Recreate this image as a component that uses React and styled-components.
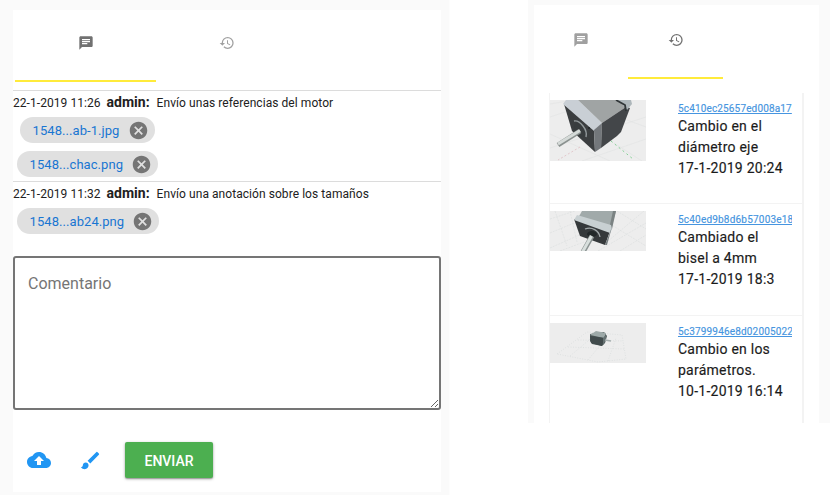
import React from "react";
import styled, { createGlobalStyle } from "styled-components";

const GlobalStyle = createGlobalStyle`
  * { box-sizing: border-box; }
  body { margin: 0; background: #fff; overflow: hidden; font-family: Roboto, sans-serif; color: #212121; }
`;

const Page = styled.main`
  display: flex;
  align-items: flex-start;
  width: 836px;
  height: 495px;
  background: #fff;
`;

const CommentsPane = styled.section`
  width: 450px;
  height: 495px;
  padding: 10px 8px 3px 13px;
  background: #fafafa;
  border-right: 1px solid #fdfdfd;
`;

const Surface = styled.div`
  height: 100%;
  background: #fff;
`;

const HistoryPane = styled.section`
  width: 302px;
  height: 423px;
  margin-left: 78px;
  padding: 5px 11px 0 6px;
  background: #fafafa;
`;

const Tabs = styled.nav`
  display: flex;
  height: ${(p) => p.$height}px;
  padding-left: ${(p) => p.$inset}px;
`;

const Tab = styled.button`
  display: flex;
  align-items: center;
  justify-content: center;
  width: ${(p) => p.$width}px;
  height: 100%;
  padding: 0 0 ${(p) => p.$lift}px;
  border: 0;
  border-bottom: 2px solid ${(p) => (p.$active ? "#ffeb3b" : "transparent")};
  background: none;
  color: ${(p) => (p.$active ? "#717171" : "#a0a0a0")};
`;

const Thread = styled.div`
  margin-top: 8px;
`;

const Comment = styled.article`
  height: ${(p) => p.$height}px;
  border-top: 1px solid #dcdcdc;
`;

const Meta = styled.p`
  display: flex;
  align-items: baseline;
  margin: 0;
  height: 26px;
  line-height: 23px;
  font-size: 12px;
  letter-spacing: 0.06px;
  white-space: pre;
`;

const Author = styled.strong`
  width: 50px;
  margin-left: 6px;
  font-size: 14px;
  font-weight: 700;
  letter-spacing: 0;
`;

const Files = styled.div`
  display: flex;
  flex-direction: column;
  align-items: flex-start;
  gap: 8px;
`;

const Chip = styled.span`
  display: flex;
  align-items: center;
  justify-content: space-between;
  width: ${(p) => p.$width}px;
  height: 26px;
  margin-left: ${(p) => p.$indent}px;
  padding: 0 6px 0 12.6px;
  border-radius: 13px;
  background: #e0e0e0;
  color: #1976d2;
  font-size: 13px;
  letter-spacing: 0.06px;
  white-space: nowrap;
`;

const CommentBox = styled.textarea`
  display: block;
  width: 428px;
  height: 154px;
  margin: 21px 0 0;
  padding: 16px 13px;
  border: 2px solid #757575;
  border-radius: 3px;
  outline: 0;
  background: #fff;
  font: 16px/20px Roboto, sans-serif;
  resize: both;
  &::placeholder { color: #757575; opacity: 1; }
`;

const Actions = styled.div`
  display: flex;
  align-items: center;
  height: 36px;
  margin-top: 32px;
  padding-left: 13px;
`;

const IconButton = styled.button`
  display: flex;
  width: 25px;
  height: 25px;
  margin-right: ${(p) => p.$after}px;
  padding: 0;
  border: 0;
  align-items: center;
  justify-content: center;
  background: none;
  color: #2196f3;
`;

const SendButton = styled.button`
  width: 88px;
  height: 36px;
  padding: 1px 0 0;
  border: 0;
  border-radius: 2px;
  background: #4caf50;
  box-shadow: 0 1px 3px rgba(0, 0, 0, 0.35), 0 1px 1px rgba(0, 0, 0, 0.18);
  color: #fff;
  font: 500 14px Roboto, sans-serif;
`;

const Versions = styled.div`
  width: 255px;
  height: 330px;
  margin: 14px 0 0 15px;
  overflow: hidden;
`;

const Version = styled.article`
  display: flex;
  height: ${(p) => p.$height}px;
  padding: 7px 10px 0 0;
  border: solid #f3f3f3;
  border-width: 0 2px 1px 1px;
`;

const Thumb = styled.svg`
  display: block;
  width: 96px;
  flex: none;
  background: #ededed;
`;

const VersionInfo = styled.div`
  width: 114px;
  margin: -1px 0 0 32px;
  overflow: hidden;
  font-size: 14px;
  line-height: 21.2px;
  letter-spacing: 0.24px;
  color: #1b1b1b;
  -webkit-text-stroke: 0.15px currentColor;
  white-space: pre-line;
`;

const VersionLink = styled.a`
  display: block;
  height: 17px;
  overflow: hidden;
  font-size: 10px;
  line-height: 19px;
  letter-spacing: ${(p) => p.$tracking}px;
  color: #4695e0;
  text-decoration: underline;
  white-space: nowrap;
`;

const Glyph = ({ size, d }) => (
  <svg width={size} height={size} viewBox="0 0 24 24" fill="currentColor">
    <path d={d} />
  </svg>
);

const paths = {
  chat: "M20 2H4c-1.1 0-1.99.9-1.99 2L2 22l4-4h14c1.1 0 2-.9 2-2V4c0-1.1-.9-2-2-2zM6 9h12v2H6V9zm8 5H6v-2h8v2zm4-6H6V6h12v2z",
  history: "M13 3a9 9 0 0 0-9 9H1l3.89 3.89.07.14L9 12H6c0-3.87 3.13-7 7-7s7 3.13 7 7-3.13 7-7 7c-1.93 0-3.68-.79-4.94-2.06l-1.42 1.42A8.954 8.954 0 0 0 13 21a9 9 0 0 0 0-18zm-1 5v5l4.28 2.54.72-1.21-3.5-2.08V8H12z",
  cancel: "M12 2C6.47 2 2 6.47 2 12s4.47 10 10 10 10-4.47 10-10S17.53 2 12 2zm5 13.59L15.59 17 12 13.41 8.41 17 7 15.59 10.59 12 7 8.41 8.41 7 12 10.59 15.59 7 17 8.41 13.41 12 17 15.59z",
  upload: "M19.35 10.04C18.67 6.59 15.64 4 12 4 9.11 4 6.6 5.64 5.35 8.04 2.34 8.36 0 10.91 0 14c0 3.31 2.69 6 6 6h13c2.76 0 5-2.24 5-5 0-2.64-2.05-4.78-4.65-4.96zM14 13v4h-4v-4H7l5-5 5 5h-3z",
  brush: "M7 14c-1.66 0-3 1.34-3 3 0 1.31-1.16 2-2 2 .92 1.22 2.49 2 4 2 2.21 0 4-1.79 4-4 0-1.66-1.34-3-3-3zm13.71-9.37-1.34-1.34a.996.996 0 0 0-1.41 0L9 12.25 11.75 15l8.96-8.96a.996.996 0 0 0 0-1.41z",
};

const FileChip = ({ name, width, indent }) => (
  <Chip $width={width} $indent={indent}>
    {name}
    <svg width="21" height="21" viewBox="0 0 24 24" fill="#757575">
      <path d={paths.cancel} />
    </svg>
  </Chip>
);

const CloseMotor = () => (
  <Thumb height="61" viewBox="0 0 96 61">
    <g stroke="#e1e3e3" strokeWidth=".6">
      <path d="M0 4 24 0M0 17 18 11M0 48 96 17M32 61 96 39M0 34 60 61M64 43 92 61M77 20 96 27" />
    </g>
    <path d="M30 47 8 60" stroke="#e2c8cc" strokeDasharray="2 2" />
    <path d="M61 41 83 59" stroke="#86d096" strokeDasharray="2 3" />
    <path d="M14 4 44 30 45 52 22 31Z" fill="#3b3e40" />
    <path d="M13 4 16 0H28L52 23 44 31Z" fill="#c9cfd5" />
    <path d="M28 0H67L76 7 52 23Z" fill="#a0a4a4" />
    <path d="M44 30 52 23 51 48 45 52Z" fill="#73777b" />
    <path d="M52 23 76 7 80 8 71 32 67 36 51 48Z" fill="#434649" />
    <path d="M68 0H81L82 4 77 10Z" fill="#aeb7bb" />
    <path d="M66 0 75 5 76 11" fill="none" stroke="#303638" strokeWidth="1.8" />
    <ellipse cx="30" cy="30" rx="5" ry="8" transform="rotate(-32 30 30)" fill="#383c3e" />
    <path d="M24 21C30 20 38 30 36 37" fill="none" stroke="#92999b" strokeWidth="1.4" />
    <path d="M30 31 8 45" stroke="#8a918f" strokeWidth="5" />
    <path d="M30 30.5 8 44" stroke="#d5dad8" strokeWidth="3" />
    <circle cx="39" cy="28" r="1" fill="#202426" />
  </Thumb>
);

const TiltedMotor = () => (
  <Thumb height="40" viewBox="0 0 96 40">
    <g fill="none" stroke="#dadddd" strokeWidth=".6" strokeDasharray="2 1">
      <path d="M0 8 25 0M0 22 29 10M0 37 34 22M10 40 34 31M58 30 94 0M67 0 96 18M60 13 96 35M48 40 96 12M70 40 96 24M5 0 17 35M20 0 27 31" />
    </g>
    <path d="M32 0H66L61 18 28 7Z" fill="#a1aaaa" />
    <path d="M63 0H66L62 18 59 18Z" fill="#7a8282" />
    <path d="M24 8 60 20 55 34 30 25Z" fill="#35393b" />
    <path d="M27 4 61 14 62 18 60 22 24 9Z" fill="#c8d0d2" />
    <path d="M60 21 62 16 57 34 55 34Z" fill="#747c7e" />
    <path d="M35 18C42 15 49 20 50 26" fill="none" stroke="#a0a8a9" strokeWidth="1.3" />
    <ellipse cx="42" cy="23" rx="5" ry="3" fill="#222829" />
    <path d="M42 25 33 41" stroke="#8b9392" strokeWidth="5" />
    <path d="M41.5 25 32.5 41" stroke="#d8dfdd" strokeWidth="3" />
  </Thumb>
);

const DistantMotor = () => (
  <Thumb height="40" viewBox="0 0 96 40">
    <g fill="none" stroke="#d4d8d8" strokeWidth=".6" strokeDasharray="1 1.5">
      <path d="M7 31 37 9 72 12 76 36 48 39 7 31M18 24 74 26M28 17 73 18M20 33 45 12M38 37 57 14M58 38 66 15" />
    </g>
    <path d="M40 11 54 9 57 13 55 20 52 23 42 21 40 18Z" fill="#4b5757" />
    <path d="M40 12 46 8 56 10 54 15Z" fill="#9da9a8" />
    <path d="M40 13 54 15 52 23 41 20Z" fill="#414b4c" />
    <path d="M53 15 56 12V17L53 22Z" fill="#657172" />
    <path d="M55 17 61 18" stroke="#a7b0b0" strokeWidth="1.5" />
  </Thumb>
);

const versions = [
  { id: "5c410ec25657ed008a17", text: "Cambio en el\ndiámetro eje\n17-1-2019 20:24", height: 111, tracking: 0.15, art: CloseMotor },
  { id: "5c40ed9b8d6b57003e18", text: "Cambiado el\nbisel a 4mm\n17-1-2019 18:3", height: 112, tracking: 0.2, art: TiltedMotor },
  { id: "5c3799946e8d02005022", text: "Cambio en los\nparámetros.\n10-1-2019 16:14", height: 112, tracking: 0.17, art: DistantMotor },
];

export default function App() {
  return (
    <>
      <GlobalStyle />
      <Page>
        <CommentsPane>
          <Surface>
            <Tabs $height={72} $inset={2}>
              <Tab $active $width={141} $lift={4} aria-label="Comentarios"><Glyph size={16} d={paths.chat} /></Tab>
              <Tab $width={141} $lift={4} aria-label="Historial"><Glyph size={16} d={paths.history} /></Tab>
            </Tabs>
            <Thread>
              <Comment $height={91}>
                <Meta>22-1-2019 11:26<Author>admin:</Author>Envío unas referencias del motor</Meta>
                <Files>
                  <FileChip name="1548...ab-1.jpg" width={135} indent={7} />
                  <FileChip name="1548...chac.png" width={141} indent={4} />
                </Files>
              </Comment>
              <Comment $height={54}>
                <Meta>22-1-2019 11:32<Author>admin:</Author>Envío una anotación sobre los tamaños</Meta>
                <Files>
                  <FileChip name="1548...ab24.png" width={142} indent={4} />
                </Files>
              </Comment>
            </Thread>
            <CommentBox placeholder="Comentario" />
            <Actions>
              <IconButton $after={27} aria-label="Subir archivo"><Glyph size={24} d={paths.upload} /></IconButton>
              <IconButton $after={22} aria-label="Dibujar"><Glyph size={23} d={paths.brush} /></IconButton>
              <SendButton>ENVIAR</SendButton>
            </Actions>
          </Surface>
        </CommentsPane>
        <HistoryPane>
          <Surface>
            <Tabs $height={74} $inset={0}>
              <Tab $width={94.4} $lift={3} aria-label="Comentarios"><Glyph size={16} d={paths.chat} /></Tab>
              <Tab $active $width={95} $lift={3} aria-label="Historial"><Glyph size={16} d={paths.history} /></Tab>
            </Tabs>
            <Versions>
              {versions.map(({ id, text, height, tracking, art: Art }) => (
                <Version key={id} $height={height}>
                  <Art />
                  <VersionInfo>
                    <VersionLink $tracking={tracking}>{id}</VersionLink>
                    {text}
                  </VersionInfo>
                </Version>
              ))}
            </Versions>
          </Surface>
        </HistoryPane>
      </Page>
    </>
  );
}
